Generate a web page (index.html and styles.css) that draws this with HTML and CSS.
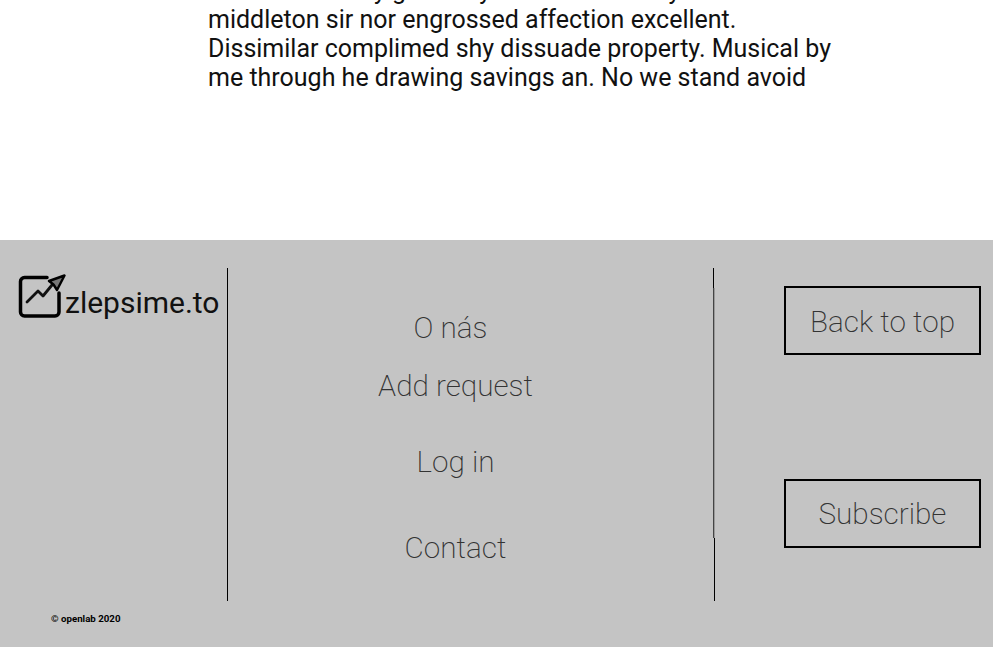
FILE: index.html
```html
<!DOCTYPE html>
<html lang="en">
<head>
    <meta charset="UTF-8">
    <meta name="viewport" content="width=device-width, initial-scale=1.0">
    <title>zlepsime.to</title>
    <link rel="stylesheet" href="styles.css">
</head>
<body>
    <main class="content">
        <p class="intro">Consulted he by given my sister on the day to<br>middleton sir nor engrossed affection excellent.<br>Dissimilar complimed shy dissuade property. Musical by<br>me through he drawing savings an. No we stand avoid</p>
    </main>

    <footer class="footer">
        <div class="footer-brand">
            <a class="logo" href="#">
                <svg class="logo-icon" viewBox="0 0 48 44" width="48" height="44" aria-hidden="true">
                    <path d="M29 3.500H6.500a4 4 0 0 0-4 4V38a4 4 0 0 0 4 4H37a4 4 0 0 0 4-4V19" fill="none" stroke="#000" stroke-width="3.500" stroke-linecap="round"/>
                    <path d="M9 28l11-11 5 5 9-11" fill="none" stroke="#111" stroke-width="2.800" stroke-linecap="round" stroke-linejoin="round"/>
                    <path d="M46.500 1.500L31 7l4.500 3.500L39 16z" fill="#777" stroke="#000" stroke-width="2.400" stroke-linejoin="round"/>
                </svg>
                <span class="logo-text">zlepsime.to</span>
            </a>
            <small class="copyright">© openlab 2020</small>
        </div>

        <nav class="footer-nav">
            <a class="nav-link nav-about" href="#">O nás</a>
            <a class="nav-link nav-add" href="#">Add request</a>
            <a class="nav-link nav-login" href="#">Log in</a>
            <a class="nav-link nav-contact" href="#">Contact</a>
        </nav>

        <div class="footer-actions">
            <a class="btn btn-top" href="#">Back to top</a>
            <a class="btn" href="#">Subscribe</a>
        </div>
    </footer>
</body>
</html>
```

FILE: styles.css
```css
/* General page styling */
html, body {
    height: 100%;
}

body {
    margin: 0;
    overflow: hidden;
    font-family: Roboto, "Liberation Sans", sans-serif;
    color: #000;
    background-color: #fff;
}

a {
    color: inherit;
    text-decoration: none;
}

/* Text block above the footer, scrolled past its first lines */
.content {
    height: 240px;
    overflow: hidden;
    padding-left: 208px;
}

.intro {
    margin: -24px 0 0;
    font-size: 25px;
    line-height: 29px;
    white-space: nowrap;
    color: #111;
}

/* Footer */
.footer {
    height: 407px;
    box-sizing: border-box;
    padding-top: 28px;
    background-color: #c4c4c4;
    display: grid;
    grid-template-columns: 228px 486px 1fr;
}

.footer-brand {
    height: 333px;
    border-right: 1px solid #000;
    position: relative;
}

.logo {
    display: flex;
    align-items: flex-end;
    padding: 6px 0 0 18px;
}

.logo-icon {
    flex: none;
}

.logo-text {
    font-size: 30px;
    line-height: 35px;
    margin: 0 0 -2px -1px;
    color: #111;
}

.copyright {
    position: absolute;
    left: 51px;
    top: 345px;
    font-size: 9.700px;
    font-weight: 700;
}

.footer-nav {
    height: 333px;
    box-sizing: border-box;
    position: relative;
    display: flex;
    flex-direction: column;
    align-items: center;
    padding: 42px 31px 0 0;
    font-size: 29.700px;
    font-weight: 200;
    line-height: 35px;
    color: #333;
}

/* the right divider steps over one pixel on its way down */
.footer-nav::after {
    content: "";
    position: absolute;
    top: 0;
    right: -1px;
    width: 2px;
    height: 100%;
    background:
        linear-gradient(to bottom, #000 6%, #444 6%, #444 81%, transparent 81%) left / 1px 100% no-repeat,
        linear-gradient(to bottom, transparent 6%, #999 6%, #999 81%, #000 81%) right / 1px 100% no-repeat;
}

.nav-about {
    margin-right: 10px;
}

.nav-add {
    margin-top: 23px;
}

.nav-login {
    margin-top: 41px;
}

.nav-contact {
    margin-top: 51px;
}

.footer-actions {
    display: flex;
    flex-direction: column;
    gap: 124px;
    padding: 18px 12px 0 70px;
}

.btn {
    height: 69px;
    box-sizing: border-box;
    border: 2px solid #000;
    display: flex;
    align-items: center;
    justify-content: center;
    font-size: 29.700px;
    font-weight: 200;
    color: #333;
}

.btn-top {
    padding-top: 2px;
}
```
